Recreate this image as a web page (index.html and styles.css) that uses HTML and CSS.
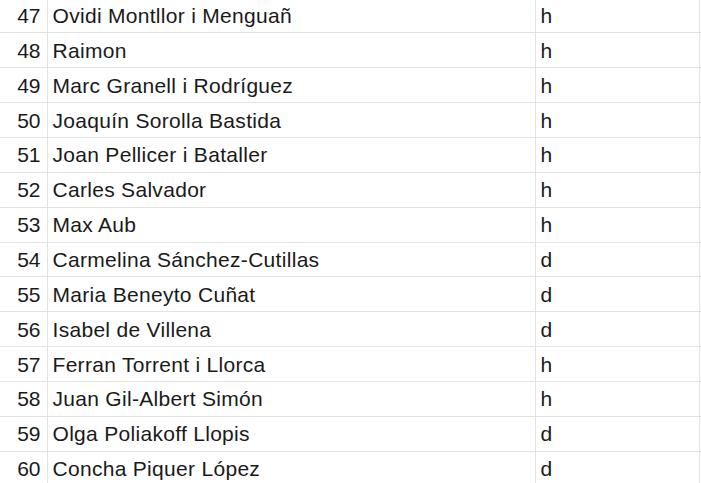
FILE: index.html
```html
<!DOCTYPE html>
<html>
<head>
<meta charset="utf-8">
<link rel="stylesheet" href="styles.css">
</head>
<body>
<div class="sheet">
  <div class="row"><div class="num">47</div><div class="name">Ovidi Montllor i Menguañ</div><div class="g">h</div></div>
  <div class="row"><div class="num">48</div><div class="name">Raimon</div><div class="g">h</div></div>
  <div class="row"><div class="num">49</div><div class="name">Marc Granell i Rodríguez</div><div class="g">h</div></div>
  <div class="row"><div class="num">50</div><div class="name">Joaquín Sorolla Bastida</div><div class="g">h</div></div>
  <div class="row"><div class="num">51</div><div class="name">Joan Pellicer i Bataller</div><div class="g">h</div></div>
  <div class="row"><div class="num">52</div><div class="name">Carles Salvador</div><div class="g">h</div></div>
  <div class="row"><div class="num">53</div><div class="name">Max Aub</div><div class="g">h</div></div>
  <div class="row"><div class="num">54</div><div class="name">Carmelina Sánchez-Cutillas</div><div class="g">d</div></div>
  <div class="row"><div class="num">55</div><div class="name">Maria Beneyto Cuñat</div><div class="g">d</div></div>
  <div class="row"><div class="num">56</div><div class="name">Isabel de Villena</div><div class="g">d</div></div>
  <div class="row"><div class="num">57</div><div class="name">Ferran Torrent i Llorca</div><div class="g">h</div></div>
  <div class="row"><div class="num">58</div><div class="name">Juan Gil-Albert Simón</div><div class="g">h</div></div>
  <div class="row"><div class="num">59</div><div class="name">Olga Poliakoff Llopis</div><div class="g">d</div></div>
  <div class="row"><div class="num">60</div><div class="name">Concha Piquer López</div><div class="g">d</div></div>
</div>
</body>
</html>
```
FILE: styles.css
```css
html, body {
  margin: 0;
  padding: 0;
  background: #ffffff;
  overflow: hidden;
}
body {
  font-family: "Liberation Sans", Arial, sans-serif;
  font-size: 21px;
  color: #1a1a1a;
}
.sheet {
  width: 701px;
  margin-top: -1.4px;
  display: flex;
  flex-direction: column;
}
.row {
  display: grid;
  grid-template-columns: 47.5px 488px 164.5px;
  height: 34.87px;
  box-sizing: border-box;
  border-bottom: 1.5px solid #e3e3e3;
}
.row > div {
  display: flex;
  align-items: center;
  box-sizing: border-box;
  border-right: 1.5px solid #e3e3e3;
  white-space: nowrap;
  overflow: hidden;
  padding-top: 1px;
}
.num {
  justify-content: flex-end;
  padding-right: 6px;
}
.name {
  padding-left: 5px;
  letter-spacing: 0.3px;
}
.g {
  padding-left: 5px;
}
```
